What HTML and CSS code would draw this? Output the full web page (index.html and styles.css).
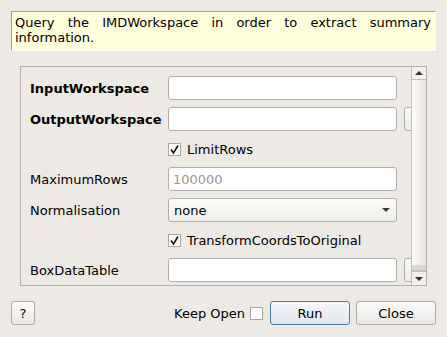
FILE: index.html
```html
<!DOCTYPE html>
<html lang="en">

<head>
    <meta charset="UTF-8">
    <title>QueryMDWorkspace</title>
    <link rel="stylesheet" href="styles.css">
</head>

<body>
    <div class="dialog">
        <div class="description">
            Query the IMDWorkspace in order to extract summary information.
        </div>

        <div class="scroll-area">
            <div class="viewport">
                <div class="prop-grid">
                    <div class="prop-label bold">InputWorkspace</div>
                    <div class="text-input"></div>
                    <div></div>

                    <div class="prop-label bold">OutputWorkspace</div>
                    <div class="text-input"></div>
                    <div class="browse-stub"></div>

                    <div></div>
                    <div class="check-row">
                        <span class="checkbox checked">
                            <svg width="11" height="11" viewBox="0 0 11 11"><path d="M2 5.5 L4.5 9 L9 1.5" fill="none" stroke="#111" stroke-width="1.6"/></svg>
                        </span>
                        <span>LimitRows</span>
                    </div>
                    <div></div>

                    <div class="prop-label">MaximumRows</div>
                    <div class="text-input placeholder">100000</div>
                    <div></div>

                    <div class="prop-label">Normalisation</div>
                    <div class="combo">
                        <span>none</span>
                        <span class="combo-arrow"></span>
                    </div>
                    <div></div>

                    <div></div>
                    <div class="check-row">
                        <span class="checkbox checked">
                            <svg width="11" height="11" viewBox="0 0 11 11"><path d="M2 5.5 L4.5 9 L9 1.5" fill="none" stroke="#111" stroke-width="1.6"/></svg>
                        </span>
                        <span>TransformCoordsToOriginal</span>
                    </div>
                    <div></div>

                    <div class="prop-label">BoxDataTable</div>
                    <div class="text-input"></div>
                    <div class="browse-stub"></div>
                </div>
            </div>

            <div class="scrollbar">
                <div class="sb-button"><span class="arrow-up"></span></div>
                <div class="sb-handle"></div>
                <div class="sb-trough"></div>
                <div class="sb-button bottom"><span class="arrow-down"></span></div>
            </div>
        </div>

        <div class="footer">
            <button class="btn help-btn">?</button>
            <div class="spacer"></div>
            <span class="keep-open">Keep Open</span>
            <span class="checkbox"></span>
            <button class="btn run-btn">Run</button>
            <button class="btn">Close</button>
        </div>
    </div>
</body>

</html>
```

FILE: styles.css
```css
* {
    margin: 0;
    padding: 0;
    box-sizing: border-box;
}

body {
    font-family: 'DejaVu Sans', Verdana, sans-serif;
    font-size: 13px;
    color: #000;
    background: #edeae6;
    width: 447px;
    height: 337px;
    overflow: hidden;
}

.dialog {
    padding-top: 11px;
}

.description {
    margin: 0 11px;
    height: 40px;
    padding: 3px 4px 0 3px;
    background: #ffffdc;
    border-top: 1px solid #a4a19d;
    border-left: 1px solid #a4a19d;
    border-right: 1px solid #ffffff;
    border-bottom: 1px solid #ffffff;
    line-height: 15px;
    text-align: justify;
}

.scroll-area {
    display: flex;
    margin: 15px 20px 0 20px;
    height: 220px;
    border: 1px solid #b4b0ab;
}

.viewport {
    flex: 1;
    overflow: hidden;
}

.prop-grid {
    display: grid;
    grid-template-columns: 131px 229px 30px;
    grid-template-rows: 24px 24px 22px 24px 24px 22px 24px;
    column-gap: 7px;
    row-gap: 7px;
    padding: 9px 0 0 9px;
    width: 420px;
}

.prop-label {
    display: flex;
    align-items: center;
    white-space: nowrap;
}

.bold {
    font-weight: bold;
}

.text-input {
    background: #fff;
    border: 1px solid #b2aeaa;
    border-radius: 3px;
    display: flex;
    align-items: center;
    padding-left: 4px;
}

.placeholder {
    color: #9a9896;
}

.browse-stub {
    border: 1px solid #b2aeaa;
    border-radius: 3px;
    background: linear-gradient(#fbfbfa, #ecebe9);
}

.combo {
    border: 1px solid #b2aeaa;
    border-radius: 3px;
    background: linear-gradient(#fcfcfb, #efeeec);
    display: flex;
    align-items: center;
    justify-content: space-between;
    padding: 0 6px 0 5px;
}

.combo-arrow {
    width: 0;
    height: 0;
    border-left: 4px solid transparent;
    border-right: 4px solid transparent;
    border-top: 4px solid #3a3a3a;
}

.check-row {
    display: flex;
    align-items: center;
    gap: 6px;
}

.checkbox {
    width: 13px;
    height: 13px;
    background: #fff;
    border: 1px solid #aaa6a2;
    display: inline-flex;
    align-items: center;
    justify-content: center;
}

.scrollbar {
    width: 15px;
    border-left: 1px solid #c2beba;
    display: flex;
    flex-direction: column;
    background: #dedbd7;
}

.sb-button {
    height: 13px;
    border-bottom: 1px solid #c2beba;
    background: #f2f0ee;
    display: flex;
    align-items: center;
    justify-content: center;
}

.sb-button.bottom {
    border-bottom: none;
    border-top: 1px solid #c2beba;
    height: 14px;
}

.arrow-up {
    width: 0;
    height: 0;
    border-left: 4px solid transparent;
    border-right: 4px solid transparent;
    border-bottom: 4px solid #333;
}

.arrow-down {
    width: 0;
    height: 0;
    border-left: 4px solid transparent;
    border-right: 4px solid transparent;
    border-top: 4px solid #333;
}

.sb-handle {
    height: 185px;
    background: linear-gradient(to right, #ffffff, #e6e4e2);
}

.sb-trough {
    flex: 1;
    background: #dcd9d5;
    border-bottom: 1px solid #c8c4c0;
}

.footer {
    display: flex;
    align-items: center;
    margin-top: 15px;
    padding: 0 11px;
}

.spacer {
    flex: 1;
}

.keep-open {
    margin-right: 5px;
}

.footer .checkbox {
    margin-right: 7px;
}

.btn {
    font-family: inherit;
    font-size: 13px;
    color: #000;
    height: 24px;
    width: 80px;
    border: 1px solid #aeaaa6;
    border-radius: 3px;
    background: linear-gradient(#fbfbfa, #e9e8e6);
    margin-left: 6px;
}

.help-btn {
    width: 24px;
    margin-left: 0;
}

.run-btn {
    border-color: #4c7ca4;
    background: linear-gradient(#f6f8fa, #e2e6ea);
    margin-left: 0;
}
```
